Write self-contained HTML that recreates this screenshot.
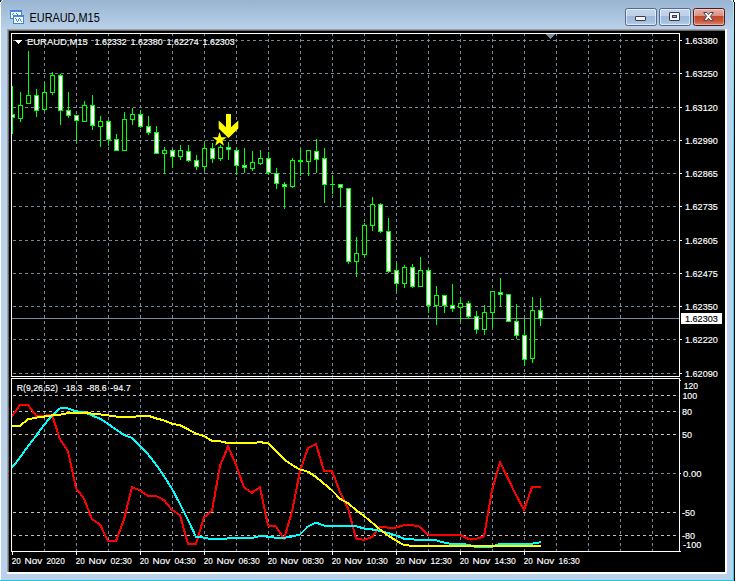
<!DOCTYPE html>
<html><head><meta charset="utf-8"><title>EURAUD,M15</title>
<style>
html,body{margin:0;padding:0}
body{width:737px;height:581px;overflow:hidden;position:relative;background:#b9d1ea;font-family:"Liberation Sans",sans-serif}
.abs{position:absolute}
#cap{left:0;top:0;width:737px;height:29px;background:linear-gradient(#99b4d1,#b9d1ea)}
#title{left:30px;top:10px;font-size:12px;line-height:14px;color:#000;white-space:nowrap;letter-spacing:-0.55px}
.btn{top:8px;width:30px;height:16px;border:1px solid #566a8b;border-radius:2.5px;background:linear-gradient(#c3d6ec 0,#bcd0e9 44%,#9db8d9 45%,#a6c0df 80%,#b9d0ea 100%);box-shadow:inset 0 0 0 1px rgba(255,255,255,.55)}
#close{border-color:#4b1a22;background:linear-gradient(#e9b3a6 0,#dc8f7f 44%,#c1472b 45%,#c9583c 75%,#dd8a70 100%);box-shadow:inset 0 0 0 1px rgba(255,255,255,.35)}
</style></head><body>
<div id="cap" class="abs"></div>
<div class="abs" style="left:0;top:0;width:1px;height:581px;background:#fff"></div>
<div class="abs" style="left:0;top:0;width:1px;height:2px;background:#222"></div><div class="abs" style="left:1px;top:0;width:1px;height:1px;background:#7a8694"></div><div class="abs" style="left:1px;top:1px;width:1px;height:1px;background:#e6eef6"></div><div class="abs" style="left:2px;top:0;width:1px;height:1px;background:#dfe8f2"></div>
<div class="abs" style="left:0;top:580px;width:734px;height:1px;background:#26c6da"></div>
<div class="abs" style="left:733px;top:0;width:1px;height:581px;background:linear-gradient(#b4ecfa 0,#40d0f0 25%,#30cce8 100%)"></div>
<div class="abs" style="left:734px;top:0;width:1px;height:581px;background:#140808"></div>
<div class="abs" style="left:735px;top:0;width:2px;height:581px;background:#fff"></div>
<div class="abs" style="left:733px;top:0;width:1px;height:2px;background:#222"></div>
<div class="abs" style="left:734px;top:0;width:1px;height:2px;background:#fff"></div><div class="abs" style="left:731px;top:0;width:2px;height:1px;background:#cdf3fb"></div><div class="abs" style="left:732px;top:1px;width:1px;height:1px;background:#c2effa"></div>
<!-- sunken edge -->
<div class="abs" style="left:7px;top:29px;width:720px;height:545px;background:#fff"></div>
<div class="abs" style="left:7px;top:29px;width:718px;height:543px;background:#a0a0a0"></div>
<div class="abs" style="left:8px;top:30px;width:717px;height:542px;background:#696969"></div>
<div class="abs" style="left:9px;top:31px;width:716px;height:541px;background:#000"></div>
<!-- title -->
<svg class="abs" style="left:10px;top:10px" width="14" height="14" viewBox="10 10 14 14" shape-rendering="crispEdges">
<rect x="10" y="10" width="12" height="9" fill="#4584fb"/>
<path d="M10.5 10v9M21.5 10v9M10 10.5h12M10 18.5h12" stroke="#3b8a78" stroke-dasharray="1 1" fill="none" opacity=".7"/>
<rect x="11" y="12" width="10" height="6" fill="#fffef6"/>
<rect x="12" y="14" width="1" height="1" fill="#4584fb"/><rect x="13" y="13" width="1" height="1" fill="#4584fb"/>
<rect x="16" y="13" width="1" height="1" fill="#4584fb"/><rect x="17" y="14" width="1" height="1" fill="#4584fb"/>
<rect x="13" y="15" width="11" height="9" fill="#4584fb"/>
<path d="M13.5 15v9M23.5 15v9M13 15.5h11M13 23.5h11" stroke="#3b8a78" stroke-dasharray="1 1" fill="none" opacity=".7"/>
<rect x="14" y="17" width="9" height="6" fill="#fffef6"/>
<path d="M15 18.5h1M16.5 19v2M17 21.5h1M18.5 19v2M19 18.5h1M20.5 19v2M21 21.5h1" stroke="#4584fb" fill="none"/>
</svg>
<svg class="abs" style="left:0;top:0" width="120" height="29" viewBox="0 0 120 29"><text x="29.5" y="21.7" font-size="12" font-family="Liberation Sans, sans-serif" fill="#000" textLength="70.2" lengthAdjust="spacingAndGlyphs">EURAUD,M15</text></svg>
<div class="btn abs" style="left:625px"></div>
<div class="abs" style="left:635px;top:16px;width:9px;height:3px;border:1px solid #3c3c50;border-radius:1px;background:#f4f4f4"></div>
<div class="btn abs" style="left:659px"></div>
<div class="abs" style="left:669px;top:12px;width:9px;height:7px;border:1px solid #3c3c50;border-radius:1px;background:#f4f4f4"></div>
<div class="abs" style="left:672px;top:15px;width:3px;height:1px;border:1px solid #3c3c50;background:#8aa6cc"></div>
<div id="close" class="btn abs" style="left:693px"></div>
<svg class="abs" style="left:700px;top:9px" width="17" height="15" viewBox="700 9 17 15">
<polygon points="703.6,12.5 706.9,12.5 708.5,14.6 710.1,12.5 713.4,12.5 710.3,16.4 713.4,20.4 710.1,20.4 708.5,18.3 706.9,20.4 703.6,20.4 706.7,16.4" fill="#fff" stroke="#45455a" stroke-width="1" stroke-linejoin="round"/>
</svg>
<svg class="abs" style="left:0;top:0" width="737" height="581" viewBox="0 0 737 581" shape-rendering="crispEdges" font-family="Liberation Sans, sans-serif">
<defs><clipPath id="cm"><rect x="12" y="34" width="667" height="342"/></clipPath><clipPath id="ci"><rect x="12" y="379" width="667" height="172"/></clipPath></defs>
<line x1="12" y1="40.5" x2="679" y2="40.5" stroke="#778899" stroke-dasharray="3 3" stroke-dashoffset="5"/>
<line x1="12" y1="73.5" x2="679" y2="73.5" stroke="#778899" stroke-dasharray="3 3" stroke-dashoffset="5"/>
<line x1="12" y1="107.5" x2="679" y2="107.5" stroke="#778899" stroke-dasharray="3 3" stroke-dashoffset="5"/>
<line x1="12" y1="140.5" x2="679" y2="140.5" stroke="#778899" stroke-dasharray="3 3" stroke-dashoffset="5"/>
<line x1="12" y1="173.5" x2="679" y2="173.5" stroke="#778899" stroke-dasharray="3 3" stroke-dashoffset="5"/>
<line x1="12" y1="206.5" x2="679" y2="206.5" stroke="#778899" stroke-dasharray="3 3" stroke-dashoffset="5"/>
<line x1="12" y1="240.5" x2="679" y2="240.5" stroke="#778899" stroke-dasharray="3 3" stroke-dashoffset="5"/>
<line x1="12" y1="273.5" x2="679" y2="273.5" stroke="#778899" stroke-dasharray="3 3" stroke-dashoffset="5"/>
<line x1="12" y1="306.5" x2="679" y2="306.5" stroke="#778899" stroke-dasharray="3 3" stroke-dashoffset="5"/>
<line x1="12" y1="339.5" x2="679" y2="339.5" stroke="#778899" stroke-dasharray="3 3" stroke-dashoffset="5"/>
<line x1="12" y1="373.5" x2="679" y2="373.5" stroke="#778899" stroke-dasharray="3 3" stroke-dashoffset="5"/>
<line x1="44.5" y1="34" x2="44.5" y2="376" stroke="#778899" stroke-dasharray="3 3" stroke-dashoffset="1"/>
<line x1="76.5" y1="34" x2="76.5" y2="376" stroke="#778899" stroke-dasharray="3 3" stroke-dashoffset="1"/>
<line x1="108.5" y1="34" x2="108.5" y2="376" stroke="#778899" stroke-dasharray="3 3" stroke-dashoffset="1"/>
<line x1="140.5" y1="34" x2="140.5" y2="376" stroke="#778899" stroke-dasharray="3 3" stroke-dashoffset="1"/>
<line x1="172.5" y1="34" x2="172.5" y2="376" stroke="#778899" stroke-dasharray="3 3" stroke-dashoffset="1"/>
<line x1="204.5" y1="34" x2="204.5" y2="376" stroke="#778899" stroke-dasharray="3 3" stroke-dashoffset="1"/>
<line x1="236.5" y1="34" x2="236.5" y2="376" stroke="#778899" stroke-dasharray="3 3" stroke-dashoffset="1"/>
<line x1="268.5" y1="34" x2="268.5" y2="376" stroke="#778899" stroke-dasharray="3 3" stroke-dashoffset="1"/>
<line x1="300.5" y1="34" x2="300.5" y2="376" stroke="#778899" stroke-dasharray="3 3" stroke-dashoffset="1"/>
<line x1="332.5" y1="34" x2="332.5" y2="376" stroke="#778899" stroke-dasharray="3 3" stroke-dashoffset="1"/>
<line x1="364.5" y1="34" x2="364.5" y2="376" stroke="#778899" stroke-dasharray="3 3" stroke-dashoffset="1"/>
<line x1="396.5" y1="34" x2="396.5" y2="376" stroke="#778899" stroke-dasharray="3 3" stroke-dashoffset="1"/>
<line x1="428.5" y1="34" x2="428.5" y2="376" stroke="#778899" stroke-dasharray="3 3" stroke-dashoffset="1"/>
<line x1="460.5" y1="34" x2="460.5" y2="376" stroke="#778899" stroke-dasharray="3 3" stroke-dashoffset="1"/>
<line x1="492.5" y1="34" x2="492.5" y2="376" stroke="#778899" stroke-dasharray="3 3" stroke-dashoffset="1"/>
<line x1="524.5" y1="34" x2="524.5" y2="376" stroke="#778899" stroke-dasharray="3 3" stroke-dashoffset="1"/>
<line x1="556.5" y1="34" x2="556.5" y2="376" stroke="#778899" stroke-dasharray="3 3" stroke-dashoffset="1"/>
<line x1="588.5" y1="34" x2="588.5" y2="376" stroke="#778899" stroke-dasharray="3 3" stroke-dashoffset="1"/>
<line x1="620.5" y1="34" x2="620.5" y2="376" stroke="#778899" stroke-dasharray="3 3" stroke-dashoffset="1"/>
<line x1="652.5" y1="34" x2="652.5" y2="376" stroke="#778899" stroke-dasharray="3 3" stroke-dashoffset="1"/>
<line x1="44.5" y1="377" x2="44.5" y2="378" stroke="#778899" stroke-dasharray="3 3" stroke-dashoffset="2"/>
<line x1="76.5" y1="377" x2="76.5" y2="378" stroke="#778899" stroke-dasharray="3 3" stroke-dashoffset="2"/>
<line x1="108.5" y1="377" x2="108.5" y2="378" stroke="#778899" stroke-dasharray="3 3" stroke-dashoffset="2"/>
<line x1="140.5" y1="377" x2="140.5" y2="378" stroke="#778899" stroke-dasharray="3 3" stroke-dashoffset="2"/>
<line x1="172.5" y1="377" x2="172.5" y2="378" stroke="#778899" stroke-dasharray="3 3" stroke-dashoffset="2"/>
<line x1="204.5" y1="377" x2="204.5" y2="378" stroke="#778899" stroke-dasharray="3 3" stroke-dashoffset="2"/>
<line x1="236.5" y1="377" x2="236.5" y2="378" stroke="#778899" stroke-dasharray="3 3" stroke-dashoffset="2"/>
<line x1="268.5" y1="377" x2="268.5" y2="378" stroke="#778899" stroke-dasharray="3 3" stroke-dashoffset="2"/>
<line x1="300.5" y1="377" x2="300.5" y2="378" stroke="#778899" stroke-dasharray="3 3" stroke-dashoffset="2"/>
<line x1="332.5" y1="377" x2="332.5" y2="378" stroke="#778899" stroke-dasharray="3 3" stroke-dashoffset="2"/>
<line x1="364.5" y1="377" x2="364.5" y2="378" stroke="#778899" stroke-dasharray="3 3" stroke-dashoffset="2"/>
<line x1="396.5" y1="377" x2="396.5" y2="378" stroke="#778899" stroke-dasharray="3 3" stroke-dashoffset="2"/>
<line x1="428.5" y1="377" x2="428.5" y2="378" stroke="#778899" stroke-dasharray="3 3" stroke-dashoffset="2"/>
<line x1="460.5" y1="377" x2="460.5" y2="378" stroke="#778899" stroke-dasharray="3 3" stroke-dashoffset="2"/>
<line x1="492.5" y1="377" x2="492.5" y2="378" stroke="#778899" stroke-dasharray="3 3" stroke-dashoffset="2"/>
<line x1="524.5" y1="377" x2="524.5" y2="378" stroke="#778899" stroke-dasharray="3 3" stroke-dashoffset="2"/>
<line x1="556.5" y1="377" x2="556.5" y2="378" stroke="#778899" stroke-dasharray="3 3" stroke-dashoffset="2"/>
<line x1="588.5" y1="377" x2="588.5" y2="378" stroke="#778899" stroke-dasharray="3 3" stroke-dashoffset="2"/>
<line x1="620.5" y1="377" x2="620.5" y2="378" stroke="#778899" stroke-dasharray="3 3" stroke-dashoffset="2"/>
<line x1="652.5" y1="377" x2="652.5" y2="378" stroke="#778899" stroke-dasharray="3 3" stroke-dashoffset="2"/>
<line x1="44.5" y1="379" x2="44.5" y2="551" stroke="#778899" stroke-dasharray="3 3" stroke-dashoffset="4"/>
<line x1="76.5" y1="379" x2="76.5" y2="551" stroke="#778899" stroke-dasharray="3 3" stroke-dashoffset="4"/>
<line x1="108.5" y1="379" x2="108.5" y2="551" stroke="#778899" stroke-dasharray="3 3" stroke-dashoffset="4"/>
<line x1="140.5" y1="379" x2="140.5" y2="551" stroke="#778899" stroke-dasharray="3 3" stroke-dashoffset="4"/>
<line x1="172.5" y1="379" x2="172.5" y2="551" stroke="#778899" stroke-dasharray="3 3" stroke-dashoffset="4"/>
<line x1="204.5" y1="379" x2="204.5" y2="551" stroke="#778899" stroke-dasharray="3 3" stroke-dashoffset="4"/>
<line x1="236.5" y1="379" x2="236.5" y2="551" stroke="#778899" stroke-dasharray="3 3" stroke-dashoffset="4"/>
<line x1="268.5" y1="379" x2="268.5" y2="551" stroke="#778899" stroke-dasharray="3 3" stroke-dashoffset="4"/>
<line x1="300.5" y1="379" x2="300.5" y2="551" stroke="#778899" stroke-dasharray="3 3" stroke-dashoffset="4"/>
<line x1="332.5" y1="379" x2="332.5" y2="551" stroke="#778899" stroke-dasharray="3 3" stroke-dashoffset="4"/>
<line x1="364.5" y1="379" x2="364.5" y2="551" stroke="#778899" stroke-dasharray="3 3" stroke-dashoffset="4"/>
<line x1="396.5" y1="379" x2="396.5" y2="551" stroke="#778899" stroke-dasharray="3 3" stroke-dashoffset="4"/>
<line x1="428.5" y1="379" x2="428.5" y2="551" stroke="#778899" stroke-dasharray="3 3" stroke-dashoffset="4"/>
<line x1="460.5" y1="379" x2="460.5" y2="551" stroke="#778899" stroke-dasharray="3 3" stroke-dashoffset="4"/>
<line x1="492.5" y1="379" x2="492.5" y2="551" stroke="#778899" stroke-dasharray="3 3" stroke-dashoffset="4"/>
<line x1="524.5" y1="379" x2="524.5" y2="551" stroke="#778899" stroke-dasharray="3 3" stroke-dashoffset="4"/>
<line x1="556.5" y1="379" x2="556.5" y2="551" stroke="#778899" stroke-dasharray="3 3" stroke-dashoffset="4"/>
<line x1="588.5" y1="379" x2="588.5" y2="551" stroke="#778899" stroke-dasharray="3 3" stroke-dashoffset="4"/>
<line x1="620.5" y1="379" x2="620.5" y2="551" stroke="#778899" stroke-dasharray="3 3" stroke-dashoffset="4"/>
<line x1="652.5" y1="379" x2="652.5" y2="551" stroke="#778899" stroke-dasharray="3 3" stroke-dashoffset="4"/>
<line x1="12" y1="395.5" x2="679" y2="395.5" stroke="#c0c0c0" stroke-dasharray="3 3" stroke-dashoffset="5"/>
<line x1="12" y1="411.5" x2="679" y2="411.5" stroke="#c0c0c0" stroke-dasharray="3 3" stroke-dashoffset="5"/>
<line x1="12" y1="434.5" x2="679" y2="434.5" stroke="#c0c0c0" stroke-dasharray="3 3" stroke-dashoffset="5"/>
<line x1="12" y1="473.5" x2="679" y2="473.5" stroke="#778899" stroke-dasharray="3 3" stroke-dashoffset="5"/>
<line x1="12" y1="512.5" x2="679" y2="512.5" stroke="#c0c0c0" stroke-dasharray="3 3" stroke-dashoffset="5"/>
<line x1="12" y1="535.5" x2="679" y2="535.5" stroke="#c0c0c0" stroke-dasharray="3 3" stroke-dashoffset="5"/>
<rect x="12" y="318" width="667" height="1" fill="#778899"/>
<polygon points="546,34 555,34 550.5,38.6" fill="#778899"/>
<g clip-path="url(#cm)">
<rect x="12" y="86" width="1" height="48" fill="#00ff00"/>
<rect x="10" y="114" width="5" height="4" fill="#00ff00"/>
<rect x="11" y="115" width="3" height="2" fill="#ffffff"/>
<rect x="20" y="92" width="1" height="30" fill="#00ff00"/>
<rect x="18" y="105" width="5" height="14" fill="#00ff00"/>
<rect x="19" y="106" width="3" height="12" fill="#000000"/>
<rect x="28" y="51" width="1" height="53" fill="#00ff00"/>
<rect x="26" y="95" width="5" height="9" fill="#00ff00"/>
<rect x="27" y="96" width="3" height="7" fill="#000000"/>
<rect x="36" y="89" width="1" height="28" fill="#00ff00"/>
<rect x="34" y="95" width="5" height="16" fill="#00ff00"/>
<rect x="35" y="96" width="3" height="14" fill="#ffffff"/>
<rect x="44" y="82" width="1" height="29" fill="#00ff00"/>
<rect x="42" y="92" width="5" height="18" fill="#00ff00"/>
<rect x="43" y="93" width="3" height="16" fill="#000000"/>
<rect x="52" y="72" width="1" height="23" fill="#00ff00"/>
<rect x="50" y="75" width="5" height="18" fill="#00ff00"/>
<rect x="51" y="76" width="3" height="16" fill="#000000"/>
<rect x="60" y="74" width="1" height="51" fill="#00ff00"/>
<rect x="58" y="75" width="5" height="36" fill="#00ff00"/>
<rect x="59" y="76" width="3" height="34" fill="#ffffff"/>
<rect x="68" y="92" width="1" height="26" fill="#00ff00"/>
<rect x="66" y="110" width="5" height="6" fill="#00ff00"/>
<rect x="67" y="111" width="3" height="4" fill="#ffffff"/>
<rect x="76" y="115" width="1" height="27" fill="#00ff00"/>
<rect x="74" y="115" width="5" height="6" fill="#00ff00"/>
<rect x="75" y="116" width="3" height="4" fill="#ffffff"/>
<rect x="84" y="101" width="1" height="21" fill="#00ff00"/>
<rect x="82" y="105" width="5" height="17" fill="#00ff00"/>
<rect x="83" y="106" width="3" height="15" fill="#000000"/>
<rect x="92" y="95" width="1" height="35" fill="#00ff00"/>
<rect x="90" y="105" width="5" height="21" fill="#00ff00"/>
<rect x="91" y="106" width="3" height="19" fill="#ffffff"/>
<rect x="100" y="116" width="1" height="31" fill="#00ff00"/>
<rect x="98" y="121" width="5" height="6" fill="#00ff00"/>
<rect x="99" y="122" width="3" height="4" fill="#000000"/>
<rect x="108" y="120" width="1" height="26" fill="#00ff00"/>
<rect x="106" y="121" width="5" height="19" fill="#00ff00"/>
<rect x="107" y="122" width="3" height="17" fill="#ffffff"/>
<rect x="116" y="134" width="1" height="17" fill="#00ff00"/>
<rect x="114" y="139" width="5" height="12" fill="#00ff00"/>
<rect x="115" y="140" width="3" height="10" fill="#ffffff"/>
<rect x="124" y="112" width="1" height="39" fill="#00ff00"/>
<rect x="122" y="119" width="5" height="32" fill="#00ff00"/>
<rect x="123" y="120" width="3" height="30" fill="#000000"/>
<rect x="132" y="108" width="1" height="17" fill="#00ff00"/>
<rect x="130" y="114" width="5" height="6" fill="#00ff00"/>
<rect x="131" y="115" width="3" height="4" fill="#000000"/>
<rect x="140" y="110" width="1" height="18" fill="#00ff00"/>
<rect x="138" y="114" width="5" height="13" fill="#00ff00"/>
<rect x="139" y="115" width="3" height="11" fill="#ffffff"/>
<rect x="148" y="116" width="1" height="19" fill="#00ff00"/>
<rect x="146" y="126" width="5" height="7" fill="#00ff00"/>
<rect x="147" y="127" width="3" height="5" fill="#ffffff"/>
<rect x="156" y="126" width="1" height="28" fill="#00ff00"/>
<rect x="154" y="132" width="5" height="22" fill="#00ff00"/>
<rect x="155" y="133" width="3" height="20" fill="#ffffff"/>
<rect x="164" y="147" width="1" height="27" fill="#00ff00"/>
<rect x="162" y="150" width="5" height="4" fill="#00ff00"/>
<rect x="163" y="151" width="3" height="2" fill="#000000"/>
<rect x="172" y="149" width="1" height="19" fill="#00ff00"/>
<rect x="170" y="150" width="5" height="7" fill="#00ff00"/>
<rect x="171" y="151" width="3" height="5" fill="#ffffff"/>
<rect x="180" y="145" width="1" height="15" fill="#00ff00"/>
<rect x="178" y="150" width="5" height="7" fill="#00ff00"/>
<rect x="179" y="151" width="3" height="5" fill="#000000"/>
<rect x="188" y="145" width="1" height="17" fill="#00ff00"/>
<rect x="186" y="151" width="5" height="10" fill="#00ff00"/>
<rect x="187" y="152" width="3" height="8" fill="#ffffff"/>
<rect x="196" y="155" width="1" height="15" fill="#00ff00"/>
<rect x="194" y="160" width="5" height="7" fill="#00ff00"/>
<rect x="195" y="161" width="3" height="5" fill="#ffffff"/>
<rect x="204" y="142" width="1" height="29" fill="#00ff00"/>
<rect x="202" y="148" width="5" height="19" fill="#00ff00"/>
<rect x="203" y="149" width="3" height="17" fill="#000000"/>
<rect x="212" y="143" width="1" height="20" fill="#00ff00"/>
<rect x="210" y="148" width="5" height="11" fill="#00ff00"/>
<rect x="211" y="149" width="3" height="9" fill="#ffffff"/>
<rect x="220" y="145" width="1" height="16" fill="#00ff00"/>
<rect x="218" y="147" width="5" height="12" fill="#00ff00"/>
<rect x="219" y="148" width="3" height="10" fill="#000000"/>
<rect x="228" y="142" width="1" height="18" fill="#00ff00"/>
<rect x="226" y="147" width="5" height="3" fill="#00ff00"/>
<rect x="227" y="148" width="3" height="1" fill="#ffffff"/>
<rect x="236" y="147" width="1" height="28" fill="#00ff00"/>
<rect x="234" y="150" width="5" height="16" fill="#00ff00"/>
<rect x="235" y="151" width="3" height="14" fill="#ffffff"/>
<rect x="244" y="148" width="1" height="25" fill="#00ff00"/>
<rect x="242" y="165" width="5" height="3" fill="#00ff00"/>
<rect x="243" y="166" width="3" height="1" fill="#ffffff"/>
<rect x="252" y="151" width="1" height="20" fill="#00ff00"/>
<rect x="250" y="162" width="5" height="7" fill="#00ff00"/>
<rect x="251" y="163" width="3" height="5" fill="#000000"/>
<rect x="260" y="150" width="1" height="15" fill="#00ff00"/>
<rect x="258" y="158" width="5" height="6" fill="#00ff00"/>
<rect x="259" y="159" width="3" height="4" fill="#000000"/>
<rect x="268" y="152" width="1" height="23" fill="#00ff00"/>
<rect x="266" y="158" width="5" height="15" fill="#00ff00"/>
<rect x="267" y="159" width="3" height="13" fill="#ffffff"/>
<rect x="276" y="168" width="1" height="21" fill="#00ff00"/>
<rect x="274" y="173" width="5" height="11" fill="#00ff00"/>
<rect x="275" y="174" width="3" height="9" fill="#ffffff"/>
<rect x="284" y="182" width="1" height="27" fill="#00ff00"/>
<rect x="282" y="184" width="5" height="3" fill="#00ff00"/>
<rect x="283" y="185" width="3" height="1" fill="#ffffff"/>
<rect x="292" y="158" width="1" height="30" fill="#00ff00"/>
<rect x="290" y="160" width="5" height="27" fill="#00ff00"/>
<rect x="291" y="161" width="3" height="25" fill="#000000"/>
<rect x="300" y="148" width="1" height="28" fill="#00ff00"/>
<rect x="298" y="160" width="5" height="2" fill="#00ff00"/>
<rect x="308" y="150" width="1" height="26" fill="#00ff00"/>
<rect x="306" y="150" width="5" height="12" fill="#00ff00"/>
<rect x="307" y="151" width="3" height="10" fill="#000000"/>
<rect x="316" y="139" width="1" height="34" fill="#00ff00"/>
<rect x="314" y="151" width="5" height="9" fill="#00ff00"/>
<rect x="315" y="152" width="3" height="7" fill="#ffffff"/>
<rect x="324" y="148" width="1" height="55" fill="#00ff00"/>
<rect x="322" y="158" width="5" height="27" fill="#00ff00"/>
<rect x="323" y="159" width="3" height="25" fill="#ffffff"/>
<rect x="332" y="175" width="1" height="19" fill="#00ff00"/>
<rect x="330" y="184" width="5" height="1" fill="#00ff00"/>
<rect x="340" y="184" width="1" height="23" fill="#00ff00"/>
<rect x="338" y="184" width="5" height="4" fill="#00ff00"/>
<rect x="339" y="185" width="3" height="2" fill="#ffffff"/>
<rect x="348" y="188" width="1" height="76" fill="#00ff00"/>
<rect x="346" y="188" width="5" height="74" fill="#00ff00"/>
<rect x="347" y="189" width="3" height="72" fill="#ffffff"/>
<rect x="356" y="237" width="1" height="40" fill="#00ff00"/>
<rect x="354" y="253" width="5" height="9" fill="#00ff00"/>
<rect x="355" y="254" width="3" height="7" fill="#000000"/>
<rect x="364" y="223" width="1" height="34" fill="#00ff00"/>
<rect x="362" y="225" width="5" height="30" fill="#00ff00"/>
<rect x="363" y="226" width="3" height="28" fill="#000000"/>
<rect x="372" y="197" width="1" height="34" fill="#00ff00"/>
<rect x="370" y="204" width="5" height="22" fill="#00ff00"/>
<rect x="371" y="205" width="3" height="20" fill="#000000"/>
<rect x="380" y="203" width="1" height="30" fill="#00ff00"/>
<rect x="378" y="204" width="5" height="28" fill="#00ff00"/>
<rect x="379" y="205" width="3" height="26" fill="#ffffff"/>
<rect x="388" y="218" width="1" height="55" fill="#00ff00"/>
<rect x="386" y="231" width="5" height="41" fill="#00ff00"/>
<rect x="387" y="232" width="3" height="39" fill="#ffffff"/>
<rect x="396" y="263" width="1" height="28" fill="#00ff00"/>
<rect x="394" y="270" width="5" height="14" fill="#00ff00"/>
<rect x="395" y="271" width="3" height="12" fill="#ffffff"/>
<rect x="404" y="265" width="1" height="23" fill="#00ff00"/>
<rect x="402" y="267" width="5" height="17" fill="#00ff00"/>
<rect x="403" y="268" width="3" height="15" fill="#000000"/>
<rect x="412" y="264" width="1" height="24" fill="#00ff00"/>
<rect x="410" y="267" width="5" height="20" fill="#00ff00"/>
<rect x="411" y="268" width="3" height="18" fill="#ffffff"/>
<rect x="420" y="257" width="1" height="30" fill="#00ff00"/>
<rect x="418" y="270" width="5" height="17" fill="#00ff00"/>
<rect x="419" y="271" width="3" height="15" fill="#000000"/>
<rect x="428" y="268" width="1" height="45" fill="#00ff00"/>
<rect x="426" y="270" width="5" height="36" fill="#00ff00"/>
<rect x="427" y="271" width="3" height="34" fill="#ffffff"/>
<rect x="436" y="286" width="1" height="39" fill="#00ff00"/>
<rect x="434" y="295" width="5" height="11" fill="#00ff00"/>
<rect x="435" y="296" width="3" height="9" fill="#000000"/>
<rect x="444" y="295" width="1" height="18" fill="#00ff00"/>
<rect x="442" y="295" width="5" height="11" fill="#00ff00"/>
<rect x="443" y="296" width="3" height="9" fill="#ffffff"/>
<rect x="452" y="284" width="1" height="28" fill="#00ff00"/>
<rect x="450" y="305" width="5" height="4" fill="#00ff00"/>
<rect x="451" y="306" width="3" height="2" fill="#ffffff"/>
<rect x="460" y="297" width="1" height="25" fill="#00ff00"/>
<rect x="458" y="303" width="5" height="5" fill="#00ff00"/>
<rect x="459" y="304" width="3" height="3" fill="#000000"/>
<rect x="468" y="301" width="1" height="18" fill="#00ff00"/>
<rect x="466" y="303" width="5" height="14" fill="#00ff00"/>
<rect x="467" y="304" width="3" height="12" fill="#ffffff"/>
<rect x="476" y="311" width="1" height="23" fill="#00ff00"/>
<rect x="474" y="316" width="5" height="14" fill="#00ff00"/>
<rect x="475" y="317" width="3" height="12" fill="#ffffff"/>
<rect x="484" y="305" width="1" height="30" fill="#00ff00"/>
<rect x="482" y="312" width="5" height="18" fill="#00ff00"/>
<rect x="483" y="313" width="3" height="16" fill="#000000"/>
<rect x="492" y="291" width="1" height="37" fill="#00ff00"/>
<rect x="490" y="291" width="5" height="22" fill="#00ff00"/>
<rect x="491" y="292" width="3" height="20" fill="#000000"/>
<rect x="500" y="278" width="1" height="29" fill="#00ff00"/>
<rect x="498" y="292" width="5" height="3" fill="#00ff00"/>
<rect x="499" y="293" width="3" height="1" fill="#ffffff"/>
<rect x="508" y="294" width="1" height="28" fill="#00ff00"/>
<rect x="506" y="294" width="5" height="28" fill="#00ff00"/>
<rect x="507" y="295" width="3" height="26" fill="#ffffff"/>
<rect x="516" y="304" width="1" height="35" fill="#00ff00"/>
<rect x="514" y="321" width="5" height="15" fill="#00ff00"/>
<rect x="515" y="322" width="3" height="13" fill="#ffffff"/>
<rect x="524" y="319" width="1" height="47" fill="#00ff00"/>
<rect x="522" y="335" width="5" height="25" fill="#00ff00"/>
<rect x="523" y="336" width="3" height="23" fill="#ffffff"/>
<rect x="532" y="297" width="1" height="66" fill="#00ff00"/>
<rect x="530" y="310" width="5" height="49" fill="#00ff00"/>
<rect x="531" y="311" width="3" height="47" fill="#000000"/>
<rect x="540" y="298" width="1" height="28" fill="#00ff00"/>
<rect x="538" y="310" width="5" height="9" fill="#00ff00"/>
<rect x="539" y="311" width="3" height="7" fill="#ffffff"/>
</g>
<polygon shape-rendering="geometricPrecision" points="226,114 231,114 231,127.3 238.3,120.6 238.3,128.6 228.5,138 218.7,128.6 218.7,120.6 226,127.3" fill="#ffff00"/>
<polygon shape-rendering="geometricPrecision" points="219.60,132.10 221.36,137.17 226.73,137.28 222.45,140.53 224.01,145.67 219.60,142.60 215.19,145.67 216.75,140.53 212.47,137.28 217.84,137.17" fill="#ffff00"/>
<g clip-path="url(#ci)">
<polyline points="12,416.2 20,405.0 28,405.0 36,415.7 44,415.7 52,414.7 60,439.4 68,451.4 76,488.2 84,498.7 92,519.2 100,524.6 108,541.0 116,541.0 124,519.5 132,487.2 140,490.4 148,496.0 156,496.0 164,500.2 172,509.9 180,515.1 188,544.0 196,544.0 204,517.4 212,510.7 220,466.0 228,446.3 236,464.7 244,487.5 252,492.7 260,487.2 268,525.6 276,526.4 284,539.1 292,511.4 300,471.0 308,448.1 316,444.0 324,471.0 332,471.0 340,492.0 348,508.4 356,538.4 364,539.9 372,536.9 380,526.7 388,527.6 396,527.6 404,525.2 412,525.2 420,526.7 428,534.6 436,534.9 444,534.9 452,534.9 460,534.9 468,538.7 476,538.7 484,536.6 492,490.4 500,462.0 508,478.5 516,494.9 524,509.9 532,487.2 540,487.2 541,487.2" fill="none" stroke="#ff0000" stroke-width="2" stroke-linejoin="round"/>
<polyline points="12,467.8 20,457.3 28,446.4 36,435.9 44,424.9 52,415.6 60,408.5 68,408.4 76,411.3 84,412.1 92,415.4 100,418.7 108,423.7 116,429.6 124,434.9 132,437.9 140,446.1 148,454.3 156,464.5 164,476.0 172,488.8 180,504.0 188,519.8 196,536.9 204,537.6 212,539.4 220,539.4 228,538.4 236,537.9 244,537.9 252,537.9 260,536.1 268,536.6 276,537.9 284,537.9 292,536.6 300,534.6 308,526.4 316,522.6 324,525.6 332,525.6 340,525.9 348,525.9 356,526.1 364,528.6 372,529.4 380,530.9 388,533.1 396,535.4 404,538.7 412,539.4 420,539.9 428,539.9 436,540.3 444,542.5 452,544.0 460,544.3 468,544.6 476,547.0 484,547.0 492,547.0 500,543.6 508,543.6 516,543.6 524,543.8 532,543.6 540,542.4 541,542.4" fill="none" stroke="#00ffff" stroke-width="2" stroke-linejoin="round"/>
<polyline points="12,426.2 20,425.9 28,419.2 36,417.7 44,416.6 52,415.4 60,414.7 68,413.2 76,412.7 84,412.7 92,413.6 100,414.4 108,415.4 116,416.5 124,417.2 132,417.2 140,415.7 148,415.7 156,418.4 164,420.4 172,423.7 180,425.2 188,429.3 196,433.7 204,435.9 212,440.9 220,441.2 228,443.1 236,443.1 244,443.1 252,443.1 260,442.1 268,443.4 276,450.9 284,459.3 292,465.0 300,469.5 308,471.7 316,477.0 324,483.7 332,490.4 340,498.7 348,503.2 356,509.9 364,515.9 372,522.6 380,529.4 388,535.4 396,540.6 404,545.1 412,545.8 420,545.8 428,545.8 436,545.8 444,545.8 452,545.8 460,545.8 468,545.8 476,545.8 484,545.8 492,545.8 500,545.8 508,545.8 516,545.8 524,545.8 532,545.8 540,545.8 541,545.8" fill="none" stroke="#ffff00" stroke-width="2" stroke-linejoin="round"/>
</g>
<rect x="11" y="33" width="669" height="1" fill="#ffffff"/>
<rect x="11" y="376" width="669" height="1" fill="#ffffff"/>
<rect x="11" y="33" width="1" height="344" fill="#ffffff"/>
<rect x="679" y="33" width="1" height="344" fill="#ffffff"/>
<rect x="11" y="378" width="669" height="1" fill="#ffffff"/>
<rect x="11" y="551" width="670" height="1" fill="#ffffff"/>
<rect x="11" y="378" width="1" height="174" fill="#ffffff"/>
<rect x="679" y="378" width="1" height="174" fill="#ffffff"/>
<rect x="680" y="40" width="2" height="1" fill="#ffffff"/>
<rect x="680" y="73" width="2" height="1" fill="#ffffff"/>
<rect x="680" y="107" width="2" height="1" fill="#ffffff"/>
<rect x="680" y="140" width="2" height="1" fill="#ffffff"/>
<rect x="680" y="173" width="2" height="1" fill="#ffffff"/>
<rect x="680" y="206" width="2" height="1" fill="#ffffff"/>
<rect x="680" y="240" width="2" height="1" fill="#ffffff"/>
<rect x="680" y="273" width="2" height="1" fill="#ffffff"/>
<rect x="680" y="306" width="2" height="1" fill="#ffffff"/>
<rect x="680" y="339" width="2" height="1" fill="#ffffff"/>
<rect x="680" y="373" width="2" height="1" fill="#ffffff"/>
<rect x="680" y="380" width="1" height="1" fill="#ffffff"/>
<rect x="680" y="473" width="1" height="1" fill="#ffffff"/>
<rect x="12" y="552" width="1" height="3" fill="#ffffff"/>
<rect x="76" y="552" width="1" height="3" fill="#ffffff"/>
<rect x="140" y="552" width="1" height="3" fill="#ffffff"/>
<rect x="204" y="552" width="1" height="3" fill="#ffffff"/>
<rect x="268" y="552" width="1" height="3" fill="#ffffff"/>
<rect x="332" y="552" width="1" height="3" fill="#ffffff"/>
<rect x="396" y="552" width="1" height="3" fill="#ffffff"/>
<rect x="460" y="552" width="1" height="3" fill="#ffffff"/>
<rect x="524" y="552" width="1" height="3" fill="#ffffff"/>
<polygon points="15,40 22,40 18.5,43.8" fill="#ffffff"/>
<rect x="681" y="313" width="41" height="11" fill="#ffffff"/>
<text x="27" y="45" font-size="9.6" fill="#ffffff" stroke="#ffffff" stroke-width="0.15" text-anchor="start" textLength="60.8" lengthAdjust="spacingAndGlyphs">EURAUD,M15</text>
<text x="94.6" y="45" font-size="9.6" fill="#ffffff" stroke="#ffffff" stroke-width="0.15" text-anchor="start" textLength="32" lengthAdjust="spacingAndGlyphs">1.62332</text>
<text x="130.6" y="45" font-size="9.6" fill="#ffffff" stroke="#ffffff" stroke-width="0.15" text-anchor="start" textLength="32" lengthAdjust="spacingAndGlyphs">1.62380</text>
<text x="166.6" y="45" font-size="9.6" fill="#ffffff" stroke="#ffffff" stroke-width="0.15" text-anchor="start" textLength="32" lengthAdjust="spacingAndGlyphs">1.62274</text>
<text x="202.6" y="45" font-size="9.6" fill="#ffffff" stroke="#ffffff" stroke-width="0.15" text-anchor="start" textLength="32" lengthAdjust="spacingAndGlyphs">1.62303</text>
<text x="685" y="44" font-size="9.6" fill="#ffffff" stroke="#ffffff" stroke-width="0.15" text-anchor="start" textLength="32.8" lengthAdjust="spacingAndGlyphs">1.63380</text>
<text x="685" y="77" font-size="9.6" fill="#ffffff" stroke="#ffffff" stroke-width="0.15" text-anchor="start" textLength="32.8" lengthAdjust="spacingAndGlyphs">1.63250</text>
<text x="685" y="111" font-size="9.6" fill="#ffffff" stroke="#ffffff" stroke-width="0.15" text-anchor="start" textLength="32.8" lengthAdjust="spacingAndGlyphs">1.63120</text>
<text x="685" y="144" font-size="9.6" fill="#ffffff" stroke="#ffffff" stroke-width="0.15" text-anchor="start" textLength="32.8" lengthAdjust="spacingAndGlyphs">1.62990</text>
<text x="685" y="177" font-size="9.6" fill="#ffffff" stroke="#ffffff" stroke-width="0.15" text-anchor="start" textLength="32.8" lengthAdjust="spacingAndGlyphs">1.62865</text>
<text x="685" y="210" font-size="9.6" fill="#ffffff" stroke="#ffffff" stroke-width="0.15" text-anchor="start" textLength="32.8" lengthAdjust="spacingAndGlyphs">1.62735</text>
<text x="685" y="244" font-size="9.6" fill="#ffffff" stroke="#ffffff" stroke-width="0.15" text-anchor="start" textLength="32.8" lengthAdjust="spacingAndGlyphs">1.62605</text>
<text x="685" y="277" font-size="9.6" fill="#ffffff" stroke="#ffffff" stroke-width="0.15" text-anchor="start" textLength="32.8" lengthAdjust="spacingAndGlyphs">1.62475</text>
<text x="685" y="310" font-size="9.6" fill="#ffffff" stroke="#ffffff" stroke-width="0.15" text-anchor="start" textLength="32.8" lengthAdjust="spacingAndGlyphs">1.62350</text>
<text x="685" y="343" font-size="9.6" fill="#ffffff" stroke="#ffffff" stroke-width="0.15" text-anchor="start" textLength="32.8" lengthAdjust="spacingAndGlyphs">1.62220</text>
<text x="685" y="377" font-size="9.6" fill="#ffffff" stroke="#ffffff" stroke-width="0.15" text-anchor="start" textLength="32.8" lengthAdjust="spacingAndGlyphs">1.62090</text>
<text x="685" y="321.7" font-size="9.6" fill="#000000" stroke="#000000" stroke-width="0.15" text-anchor="start" textLength="32.8" lengthAdjust="spacingAndGlyphs">1.62303</text>
<text x="16.7" y="391" font-size="9.6" fill="#ffffff" stroke="#ffffff" stroke-width="0.15" text-anchor="start" textLength="41.3" lengthAdjust="spacingAndGlyphs">R(9,26,52)</text>
<text x="62.9" y="391" font-size="9.6" fill="#ffffff" stroke="#ffffff" stroke-width="0.15" text-anchor="start" textLength="19.4" lengthAdjust="spacingAndGlyphs">-18.3</text>
<text x="86.7" y="391" font-size="9.6" fill="#ffffff" stroke="#ffffff" stroke-width="0.15" text-anchor="start" textLength="20" lengthAdjust="spacingAndGlyphs">-88.6</text>
<text x="110.2" y="391" font-size="9.6" fill="#ffffff" stroke="#ffffff" stroke-width="0.15" text-anchor="start" textLength="20.6" lengthAdjust="spacingAndGlyphs">-94.7</text>
<text x="683.7" y="388.5" font-size="9.6" fill="#ffffff" stroke="#ffffff" stroke-width="0.15" text-anchor="start" textLength="14.3" lengthAdjust="spacingAndGlyphs">120</text>
<text x="682.4" y="398.9" font-size="9.6" fill="#ffffff" stroke="#ffffff" stroke-width="0.15" text-anchor="start" textLength="14.8" lengthAdjust="spacingAndGlyphs">100</text>
<text x="682" y="415" font-size="9.6" fill="#ffffff" stroke="#ffffff" stroke-width="0.15" text-anchor="start" textLength="10" lengthAdjust="spacingAndGlyphs">80</text>
<text x="682" y="438" font-size="9.6" fill="#ffffff" stroke="#ffffff" stroke-width="0.15" text-anchor="start" textLength="10" lengthAdjust="spacingAndGlyphs">50</text>
<text x="683" y="477" font-size="9.6" fill="#ffffff" stroke="#ffffff" stroke-width="0.15" text-anchor="start" textLength="18.5" lengthAdjust="spacingAndGlyphs">0.00</text>
<text x="682" y="516" font-size="9.6" fill="#ffffff" stroke="#ffffff" stroke-width="0.15" text-anchor="start" textLength="13" lengthAdjust="spacingAndGlyphs">-50</text>
<text x="682" y="539" font-size="9.6" fill="#ffffff" stroke="#ffffff" stroke-width="0.15" text-anchor="start" textLength="13" lengthAdjust="spacingAndGlyphs">-80</text>
<text x="683" y="547.7" font-size="9.6" fill="#ffffff" stroke="#ffffff" stroke-width="0.15" text-anchor="start" textLength="18.3" lengthAdjust="spacingAndGlyphs">-100</text>
<text x="11.8" y="564" font-size="9.6" fill="#ffffff" stroke="#ffffff" stroke-width="0.15" text-anchor="start" textLength="9" lengthAdjust="spacingAndGlyphs">20</text>
<text x="24.6" y="564" font-size="9.6" fill="#ffffff" stroke="#ffffff" stroke-width="0.15" text-anchor="start" textLength="17.6" lengthAdjust="spacingAndGlyphs">Nov</text>
<text x="46.400000000000006" y="564" font-size="9.6" fill="#ffffff" stroke="#ffffff" stroke-width="0.15" text-anchor="start" textLength="18.4" lengthAdjust="spacingAndGlyphs">2020</text>
<text x="75.8" y="564" font-size="9.6" fill="#ffffff" stroke="#ffffff" stroke-width="0.15" text-anchor="start" textLength="9" lengthAdjust="spacingAndGlyphs">20</text>
<text x="88.6" y="564" font-size="9.6" fill="#ffffff" stroke="#ffffff" stroke-width="0.15" text-anchor="start" textLength="17.6" lengthAdjust="spacingAndGlyphs">Nov</text>
<text x="110.4" y="564" font-size="9.6" fill="#ffffff" stroke="#ffffff" stroke-width="0.15" text-anchor="start" textLength="21.5" lengthAdjust="spacingAndGlyphs">02:30</text>
<text x="139.8" y="564" font-size="9.6" fill="#ffffff" stroke="#ffffff" stroke-width="0.15" text-anchor="start" textLength="9" lengthAdjust="spacingAndGlyphs">20</text>
<text x="152.60000000000002" y="564" font-size="9.6" fill="#ffffff" stroke="#ffffff" stroke-width="0.15" text-anchor="start" textLength="17.6" lengthAdjust="spacingAndGlyphs">Nov</text>
<text x="174.4" y="564" font-size="9.6" fill="#ffffff" stroke="#ffffff" stroke-width="0.15" text-anchor="start" textLength="21.5" lengthAdjust="spacingAndGlyphs">04:30</text>
<text x="203.8" y="564" font-size="9.6" fill="#ffffff" stroke="#ffffff" stroke-width="0.15" text-anchor="start" textLength="9" lengthAdjust="spacingAndGlyphs">20</text>
<text x="216.60000000000002" y="564" font-size="9.6" fill="#ffffff" stroke="#ffffff" stroke-width="0.15" text-anchor="start" textLength="17.6" lengthAdjust="spacingAndGlyphs">Nov</text>
<text x="238.4" y="564" font-size="9.6" fill="#ffffff" stroke="#ffffff" stroke-width="0.15" text-anchor="start" textLength="21.5" lengthAdjust="spacingAndGlyphs">06:30</text>
<text x="267.8" y="564" font-size="9.6" fill="#ffffff" stroke="#ffffff" stroke-width="0.15" text-anchor="start" textLength="9" lengthAdjust="spacingAndGlyphs">20</text>
<text x="280.6" y="564" font-size="9.6" fill="#ffffff" stroke="#ffffff" stroke-width="0.15" text-anchor="start" textLength="17.6" lengthAdjust="spacingAndGlyphs">Nov</text>
<text x="302.40000000000003" y="564" font-size="9.6" fill="#ffffff" stroke="#ffffff" stroke-width="0.15" text-anchor="start" textLength="21.5" lengthAdjust="spacingAndGlyphs">08:30</text>
<text x="331.8" y="564" font-size="9.6" fill="#ffffff" stroke="#ffffff" stroke-width="0.15" text-anchor="start" textLength="9" lengthAdjust="spacingAndGlyphs">20</text>
<text x="344.6" y="564" font-size="9.6" fill="#ffffff" stroke="#ffffff" stroke-width="0.15" text-anchor="start" textLength="17.6" lengthAdjust="spacingAndGlyphs">Nov</text>
<text x="366.40000000000003" y="564" font-size="9.6" fill="#ffffff" stroke="#ffffff" stroke-width="0.15" text-anchor="start" textLength="21.5" lengthAdjust="spacingAndGlyphs">10:30</text>
<text x="395.8" y="564" font-size="9.6" fill="#ffffff" stroke="#ffffff" stroke-width="0.15" text-anchor="start" textLength="9" lengthAdjust="spacingAndGlyphs">20</text>
<text x="408.6" y="564" font-size="9.6" fill="#ffffff" stroke="#ffffff" stroke-width="0.15" text-anchor="start" textLength="17.6" lengthAdjust="spacingAndGlyphs">Nov</text>
<text x="430.40000000000003" y="564" font-size="9.6" fill="#ffffff" stroke="#ffffff" stroke-width="0.15" text-anchor="start" textLength="21.5" lengthAdjust="spacingAndGlyphs">12:30</text>
<text x="459.8" y="564" font-size="9.6" fill="#ffffff" stroke="#ffffff" stroke-width="0.15" text-anchor="start" textLength="9" lengthAdjust="spacingAndGlyphs">20</text>
<text x="472.6" y="564" font-size="9.6" fill="#ffffff" stroke="#ffffff" stroke-width="0.15" text-anchor="start" textLength="17.6" lengthAdjust="spacingAndGlyphs">Nov</text>
<text x="494.40000000000003" y="564" font-size="9.6" fill="#ffffff" stroke="#ffffff" stroke-width="0.15" text-anchor="start" textLength="21.5" lengthAdjust="spacingAndGlyphs">14:30</text>
<text x="523.8" y="564" font-size="9.6" fill="#ffffff" stroke="#ffffff" stroke-width="0.15" text-anchor="start" textLength="9" lengthAdjust="spacingAndGlyphs">20</text>
<text x="536.5999999999999" y="564" font-size="9.6" fill="#ffffff" stroke="#ffffff" stroke-width="0.15" text-anchor="start" textLength="17.6" lengthAdjust="spacingAndGlyphs">Nov</text>
<text x="558.4" y="564" font-size="9.6" fill="#ffffff" stroke="#ffffff" stroke-width="0.15" text-anchor="start" textLength="21.5" lengthAdjust="spacingAndGlyphs">16:30</text>
</svg>
</body></html>
